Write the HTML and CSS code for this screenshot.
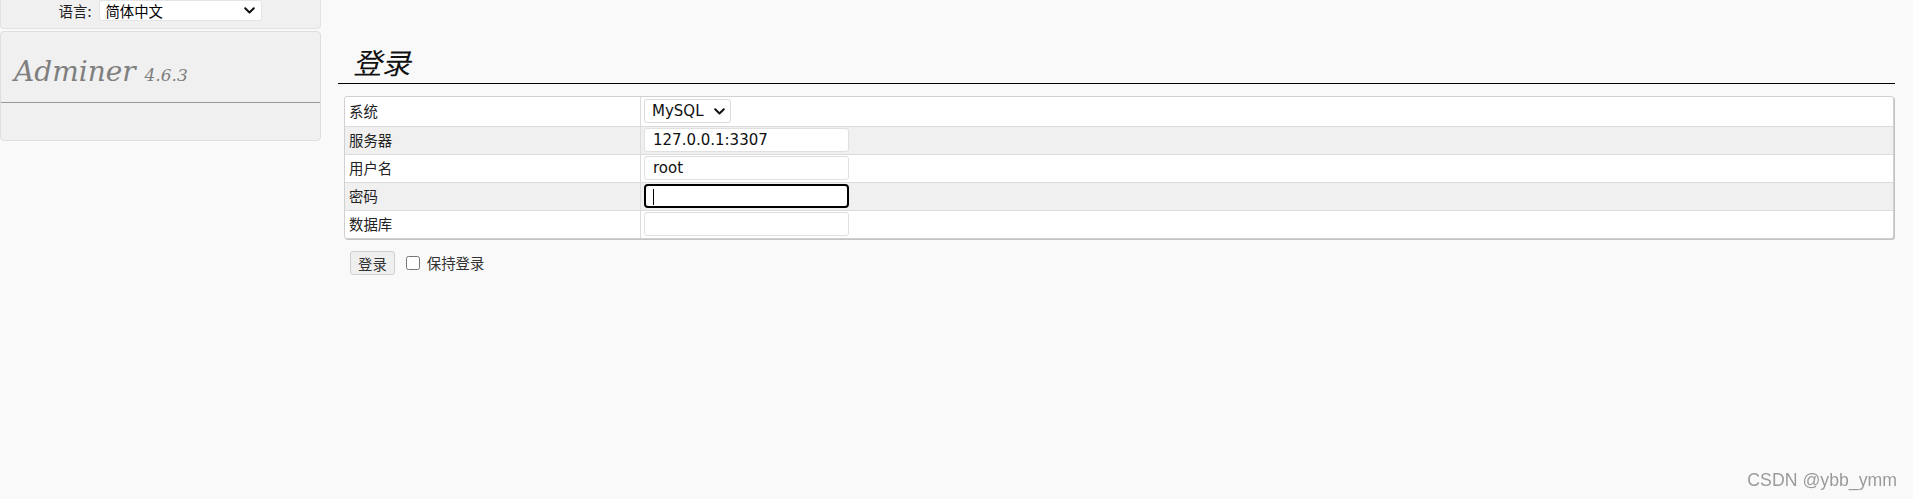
FILE: index.html
```html
<!DOCTYPE html>
<html lang="zh-CN">
<head>
<meta charset="utf-8">
<title>登录 - Adminer</title>
<link rel="stylesheet" href="styles.css">
</head>
<body>
<div class="page">
  <aside class="sidebar">
    <div class="lang">
      <span class="lang-label">语言:</span>
      <span class="select-wrap">
        <select class="lang-select">
          <option>简体中文</option>
        </select>
        <svg class="chevron chevron-lang" width="11" height="7" viewBox="0 0 11 7"><path d="M1.2 1.2 L5.5 5.5 L9.8 1.2" fill="none" stroke="#111" stroke-width="2" stroke-linecap="round" stroke-linejoin="round"/></svg>
      </span>
    </div>
    <div class="menu">
      <h1 class="brand"><span class="brand-name">Adminer</span> <span class="version">4.6.3</span></h1>
    </div>
  </aside>
  <main class="content">
    <h2 class="title">登录</h2>
    <table class="login">
      <tr>
        <th>系统</th>
        <td>
          <span class="select-wrap">
            <select class="driver"><option>MySQL</option></select>
            <svg class="chevron chevron-driver" width="11" height="7" viewBox="0 0 11 7"><path d="M1.2 1.2 L5.5 5.5 L9.8 1.2" fill="none" stroke="#111" stroke-width="2" stroke-linecap="round" stroke-linejoin="round"/></svg>
          </span>
        </td>
      </tr>
      <tr class="odd">
        <th>服务器</th>
        <td><input class="field" type="text" value="127.0.0.1:3307"></td>
      </tr>
      <tr>
        <th>用户名</th>
        <td><input class="field" type="text" value="root"></td>
      </tr>
      <tr class="odd">
        <th>密码</th>
        <td><span class="focus-wrap"><input class="field field-focus" type="password" value=""><span class="caret"></span></span></td>
      </tr>
      <tr>
        <th>数据库</th>
        <td><input class="field" type="text" value=""></td>
      </tr>
    </table>
    <p class="actions">
      <button class="btn" type="button">登录</button>
      <label class="remember"><input class="check" type="checkbox">保持登录</label>
    </p>
  </main>
</div>
<div class="watermark">CSDN @ybb_ymm</div>
</body>
</html>
```

FILE: styles.css
```css
html, body {
  margin: 0;
  padding: 0;
}

body {
  background: #f9f9f9;
  color: #222;
  font: 14.4px/1.25 "DejaVu Sans", "Noto Sans CJK SC", sans-serif;
}

.page {
  display: flex;
  align-items: flex-start;
}

.sidebar {
  width: 321px;
  flex: none;
}

.lang {
  box-sizing: border-box;
  height: 29px;
  display: flex;
  justify-content: center;
  align-items: flex-start;
  gap: 8px;
  background: #f0f0f0;
  border: 1px solid #e2e2e2;
  border-top: none;
  border-radius: 0 0 4px 4px;
}

.lang-label {
  font-family: "Noto Sans CJK SC", sans-serif;
  line-height: 21px;
  color: #222;
}

.select-wrap {
  position: relative;
  display: inline-block;
  vertical-align: middle;
}

.chevron {
  position: absolute;
  pointer-events: none;
}

.chevron-lang {
  right: 7px;
  top: 7px;
}

.chevron-driver {
  right: 6px;
  top: 9px;
}

.lang-select {
  -webkit-appearance: none;
  appearance: none;
  display: block;
  box-sizing: border-box;
  width: 163px;
  height: 21px;
  margin: 0;
  padding: 0 20px 0 5px;
  font: 14.4px/19px "Noto Sans CJK SC", sans-serif;
  color: #000;
  background: #fff;
  border: 1px solid #e4e4e4;
  border-radius: 3px;
}

.menu {
  box-sizing: border-box;
  margin-top: 2px;
  height: 110px;
  background: #f0f0f0;
  border: 1px solid #dedede;
  border-radius: 4px;
}

.brand {
  box-sizing: border-box;
  height: 71px;
  margin: 0;
  padding: 20px 0 0 13px;
  border-bottom: 1px solid #999;
  font: italic normal 28px/40px "DejaVu Serif", "Liberation Serif", serif;
  color: #7f7f7f;
  white-space: nowrap;
}

.version {
  font-size: 17px;
}

.content {
  flex: 1;
  margin: 0 18px 0 17px;
}

.title {
  margin: 0;
  padding: 44px 0 3px 15px;
  font: italic normal 28.8px/36px "Noto Sans CJK SC", serif;
  color: #111;
  border-bottom: 1px solid #000;
}

.login {
  width: calc(100% - 7px);
  margin: 12px 1px 0 6px;
  border-collapse: separate;
  border-spacing: 0;
  background: #fff;
  border: 1px solid #d0d0d0;
  border-radius: 3px;
  box-shadow: 1px 1px 0 #c4c4c4;
}

.login th,
.login td {
  padding: 1px 3px 2px;
  border-top: 1px solid #dcdcdc;
  vertical-align: middle;
}

.login tr:first-child th,
.login tr:first-child td {
  border-top: none;
  padding-top: 2px;
  padding-bottom: 3px;
}

.login th {
  width: 288px;
  padding-left: 4px;
  text-align: left;
  font-weight: normal;
  font-family: "Noto Sans CJK SC", sans-serif;
  color: #222;
  border-right: 1px solid #dcdcdc;
}

.login tr.odd th,
.login tr.odd td {
  background: #f0f0f0;
}

.driver {
  -webkit-appearance: none;
  appearance: none;
  display: block;
  box-sizing: border-box;
  width: 87px;
  height: 24px;
  margin: 0;
  padding: 0 20px 0 7px;
  font: 15px/22px "DejaVu Sans", sans-serif;
  color: #111;
  background: #fff;
  border: 1px solid #dcdcdc;
  border-radius: 3px;
}

.field {
  box-sizing: border-box;
  display: block;
  width: 205px;
  height: 24px;
  margin: 0;
  padding: 0 8px;
  font: 15px "DejaVu Sans", sans-serif;
  color: #111;
  background: #fff;
  border: 1px solid #e0e0e0;
  border-radius: 3px;
  outline: none;
}

.focus-wrap {
  position: relative;
  display: block;
  width: 205px;
}

.field-focus {
  border: 2px solid #000;
  border-radius: 4px;
}

.caret {
  position: absolute;
  left: 9px;
  top: 5px;
  width: 1px;
  height: 16px;
  background: #000;
}

.actions {
  display: flex;
  align-items: center;
  margin: 12px 0 0;
  padding-left: 12px;
}

.btn {
  box-sizing: border-box;
  height: 24px;
  margin: 0;
  padding: 0 7px;
  font: 14.4px "Noto Sans CJK SC", sans-serif;
  color: #333;
  background: #efefef;
  border: 1px solid #cfcfcf;
  border-radius: 3px;
}

.remember {
  display: flex;
  align-items: center;
  margin-left: 8px;
  font-family: "Noto Sans CJK SC", sans-serif;
  color: #333;
}

.check {
  width: 14px;
  height: 14px;
  margin: 0 7px 0 3px;
}

.watermark {
  position: fixed;
  right: 16px;
  bottom: 8px;
  font: 17.7px "Liberation Sans", Arial, sans-serif;
  color: #9a9a9a;
  text-shadow: 0 0 1px #fff;
}
```
